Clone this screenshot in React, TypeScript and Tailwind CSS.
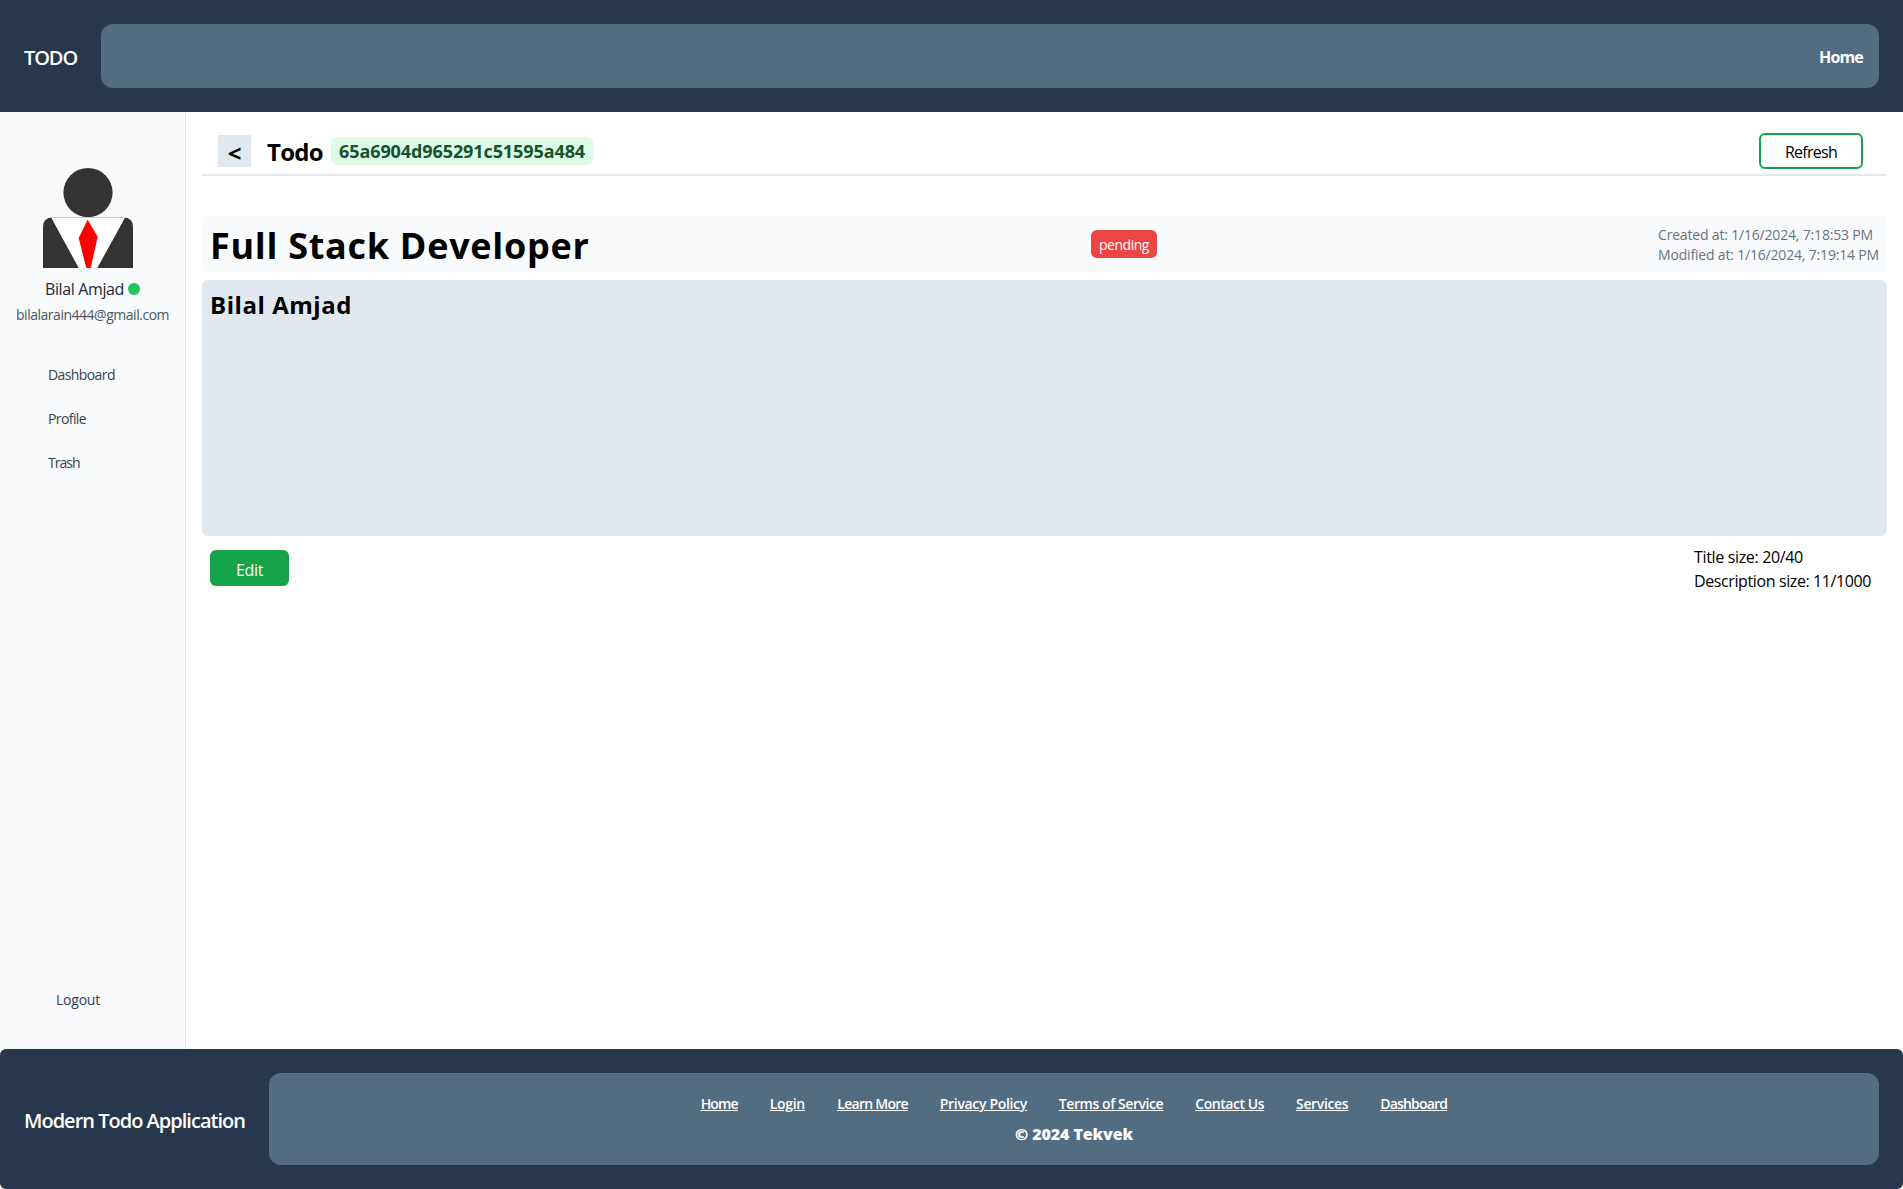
const footerLinks = [
  { label: "Home", cls: "w-[37.2px] tracking-[-0.87px]" },
  { label: "Login", cls: "w-[35.5px] tracking-[-0.34px]" },
  { label: "Learn More", cls: "w-[70.5px] tracking-[-0.74px]" },
  { label: "Privacy Policy", cls: "w-[87px] tracking-[-0.33px]" },
  { label: "Terms of Service", cls: "w-[104.5px] tracking-[-0.43px]" },
  { label: "Contact Us", cls: "w-[68.7px] tracking-[-0.46px]" },
  { label: "Services", cls: "w-[52.3px] tracking-[-0.35px]" },
  { label: "Dashboard", cls: "w-[67px] tracking-[-0.83px]" },
];

const navItems = [
  { label: "Dashboard", cls: "tracking-[-0.6px]" },
  { label: "Profile", cls: "tracking-[-0.6px]" },
  { label: "Trash", cls: "tracking-[-0.95px]" },
];

function Avatar() {
  return (
    <svg width="90" height="100" viewBox="0 0 90 100" className="block">
      <circle cx="45" cy="24.6" r="24.6" fill="#333" />
      <path d="M0 100V59Q0 49.5 9.5 49.5H80.5Q90 49.5 90 59V100Z" fill="#333" />
      <path d="M8.3 49.7H82L54.3 100H35.7Z" fill="#fff" />
      <path d="M8.3 49.5H82" stroke="#ccc" strokeWidth="1" />
      <path d="M44.7 51.7L54.7 68.7L47.7 100H43.3L35.7 70Z" fill="red" />
    </svg>
  );
}

function Header() {
  return (
    <header className="flex h-28 items-center gap-6 bg-[#27374d] p-6 text-white">
      <span className="w-[53px] whitespace-nowrap pt-1 text-xl font-semibold tracking-[-1.1px]">TODO</span>
      <nav className="flex h-16 flex-1 items-center justify-end rounded-xl bg-[#526d82] px-4">
        <a className="w-11 pt-0.5 font-bold tracking-[-0.83px]">Home</a>
      </nav>
    </header>
  );
}

function Sidebar() {
  return (
    <aside className="flex w-[186px] flex-col whitespace-nowrap border-r border-[#e5e7eb] bg-[#f8fafc] pt-14">
      <div className="pl-[43px]">
        <Avatar />
      </div>
      <div className="mt-[9px] flex items-center gap-1 pl-[45px] text-[#1f2937]">
        <span className="w-[79px] tracking-[-0.38px]">Bilal Amjad</span>
        <span className="size-3 rounded-full bg-[#22c55e]" />
      </div>
      <p className="mt-1 pl-4 text-sm tracking-[-0.48px] text-[#4b5563]">bilalarain444@gmail.com</p>
      <ul className="mt-10 flex flex-col gap-6 pl-12 text-sm text-[#374151]">
        {navItems.map((n) => (
          <li key={n.label} className={n.cls}>{n.label}</li>
        ))}
      </ul>
      <button className="mb-[39px] mt-auto self-start pl-14 text-sm tracking-[-0.22px] text-[#374151]">Logout</button>
    </aside>
  );
}

function TodoPage() {
  return (
    <main className="flex-1 whitespace-nowrap px-4 pt-[21px] text-black">
      <div className="flex h-[43px] items-start justify-between border-b-2 border-[#e5e7eb] pl-4 pr-6">
        <div className="flex items-start pt-0.5">
          <button className="h-8 w-[33px] bg-[#e2e8f0] text-2xl font-bold leading-9">&lt;</button>
          <h1 className="ml-4 w-14 text-2xl font-bold leading-[34px] tracking-[-0.7px]">Todo</h1>
          <span className="ml-2 mt-0.5 h-7 w-[262px] rounded-md bg-[#dcfce7] px-2 text-lg font-bold tracking-[-0.09px] text-[#14532d]">
            65a6904d965291c51595a484
          </span>
        </div>
        <button className="h-9 w-[104px] rounded-md border-2 border-[#16a34a] pt-0.5 tracking-[-0.74px]">Refresh</button>
      </div>

      <div className="mt-10 flex h-14 items-center justify-between rounded-md bg-[#f8fafc] px-2">
        <h2 className="w-[378px] pt-1 text-4xl font-bold tracking-[0.7px]">Full Stack Developer</h2>
        <span className="ml-0.5 h-7 w-[66px] rounded-md bg-[#ef4444] pt-[5px] text-center text-sm tracking-[-0.47px] text-white">
          pending
        </span>
        <div className="w-[221px] pt-0.5 text-sm tracking-[-0.18px] text-[#6b7280]">
          <p>Created at: 1/16/2024, 7:18:53 PM</p>
          <p>Modified at: 1/16/2024, 7:19:14 PM</p>
        </div>
      </div>

      <div className="mt-2 h-64 rounded-md bg-[#e2e8f0] px-2 pt-[9px] text-2xl font-bold tracking-[0.55px]">Bilal Amjad</div>

      <div className="flex items-start justify-between pl-2 pr-4 pt-[9px]">
        <button className="mt-[5px] h-9 w-[79px] rounded-md bg-[#16a34a] pt-[3px] tracking-[-0.36px] text-white">Edit</button>
        <div className="w-[177px]">
          <p className="tracking-[-0.34px]">Title size: 20/40</p>
          <p className="tracking-[-0.39px]">Description size: 11/1000</p>
        </div>
      </div>
    </main>
  );
}

function Footer() {
  return (
    <footer className="flex h-[140px] items-center gap-6 rounded-md bg-[#27374d] p-6 text-white">
      <span className="w-[221px] whitespace-nowrap pt-1 text-xl font-semibold tracking-[-0.99px]">Modern Todo Application</span>
      <div className="flex h-[92px] flex-1 flex-col items-center rounded-xl bg-[#526d82] pt-[21px]">
        <nav className="flex gap-8 whitespace-nowrap text-sm font-semibold underline">
          {footerLinks.map((l) => (
            <a key={l.label} className={l.cls}>{l.label}</a>
          ))}
        </nav>
        <p className="mt-2 font-extrabold tracking-[-0.1px]">© 2024 Tekvek</p>
      </div>
    </footer>
  );
}

export default function App() {
  return (
    <div className="flex h-[1189px] flex-col bg-white font-['Open_Sans',sans-serif]">
      <Header />
      <div className="flex flex-1">
        <Sidebar />
        <TodoPage />
      </div>
      <Footer />
    </div>
  );
}
